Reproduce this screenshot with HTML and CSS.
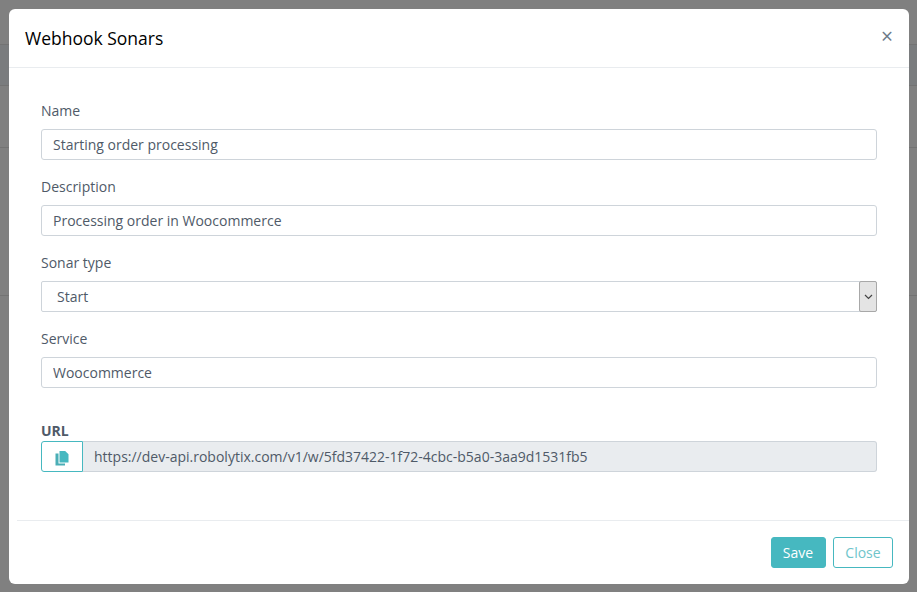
FILE: index.html
```html
<!DOCTYPE html>
<html lang="en">
<head>
<meta charset="utf-8">
<title>Webhook Sonars</title>
<link rel="stylesheet" href="styles.css">
</head>
<body>
<div class="backdrop">
  <div class="bg-row bg-row-1"></div>
  <div class="bg-row bg-row-2"></div>
  <div class="bg-row bg-row-3"></div>
  <div class="bg-row bg-row-4"></div>
  <div class="bg-row bg-row-5"></div>
</div>
<div class="modal">
  <header class="modal-header">
    <h5 class="modal-title">Webhook Sonars</h5>
    <span class="close-x">×</span>
  </header>
  <div class="modal-body">
    <div class="field">
      <label class="label">Name</label>
      <input class="control" type="text" value="Starting order processing">
    </div>
    <div class="field">
      <label class="label">Description</label>
      <input class="control" type="text" value="Processing order in Woocommerce">
    </div>
    <div class="field">
      <label class="label">Sonar type</label>
      <div class="select">
        <span class="select-value">Start</span>
        <span class="select-arrow">
          <svg width="9" height="6" viewBox="0 0 9 6"><path d="M1 1l3.5 3.5L8 1" fill="none" stroke="#444" stroke-width="1.2"/></svg>
        </span>
      </div>
    </div>
    <div class="field">
      <label class="label">Service</label>
      <input class="control" type="text" value="Woocommerce">
    </div>
    <div class="url-block">
      <label class="url-label">URL</label>
      <div class="input-group">
        <button class="copy-btn" type="button">
          <svg width="14" height="15" viewBox="0 0 14 15"><path d="M4.5 0H10.2L13.5 3.3V11.5H4.5Z" fill="#46b8c0"/><path d="M0.5 2.5H3.5V12.5H10V14.5H0.5Z" fill="#4aaeb6"/></svg>
        </button>
        <div class="readonly">https://dev-api.robolytix.com/v1/w/5fd37422-1f72-4cbc-b5a0-3aa9d1531fb5</div>
      </div>
    </div>
  </div>
  <footer class="modal-footer">
    <button class="btn btn-save" type="button">Save</button>
    <button class="btn btn-close" type="button">Close</button>
  </footer>
</div>
</body>
</html>
```
FILE: styles.css
```css
* { box-sizing: border-box; }
html, body { margin: 0; height: 100%; overflow: hidden; }
body {
  background: #808080;
  font-family: "Open Sans", sans-serif;
  font-size: 14px;
  color: #4f5a68;
}
.backdrop { height: 592px; }
.bg-row { border-bottom: 1px solid #737373; }
.bg-row-1 { height: 45px; }
.bg-row-2 { height: 41px; background: #7a7c7e; }
.bg-row-3 { height: 62px; }
.bg-row-4 { height: 148px; }
.bg-row-5 { height: 296px; border-bottom: 0; }
.modal {
  position: absolute;
  left: 9px;
  top: 9px;
  width: 900px;
  height: 575px;
  background: #fff;
  border-radius: 6px;
  display: flex;
  flex-direction: column;
}
.modal-header {
  height: 59px;
  flex: none;
  border-bottom: 1px solid #e9ecef;
  display: flex;
  align-items: center;
  justify-content: space-between;
  padding: 0 16px;
}
.modal-title {
  margin: 0;
  font-size: 17.5px;
  font-weight: 400;
  color: #000;
  line-height: 27px;
}
.close-x {
  font-size: 21px;
  line-height: 1;
  color: #6c7a89;
  margin-top: -3px;
}
.modal-body {
  flex: 1;
  padding: 32px 32px 0;
}
.field { margin-bottom: 16px; }
.label {
  display: block;
  height: 21px;
  line-height: 21px;
  margin-bottom: 8px;
  color: #4f5a68;
}
.control, .select {
  display: block;
  width: 100%;
  height: 31px;
  border: 1px solid #ced4da;
  border-radius: 3px;
  background: #fff;
  font: inherit;
  color: #4f5a68;
  padding: 0 11px;
  outline: none;
}
.select {
  display: flex;
  align-items: center;
  justify-content: space-between;
  padding: 0 0 0 15px;
  border-radius: 2px;
}
.select-arrow {
  width: 18px;
  height: 31px;
  margin-right: -1px;
  background: #e4e4e4;
  border: 1px solid #a8a8a8;
  border-radius: 2px;
  display: flex;
  align-items: center;
  justify-content: center;
}
.url-block { margin-top: 32px; }
.url-label {
  display: block;
  height: 20px;
  line-height: 21px;
  font-weight: 700;
  color: #4f5a68;
  margin-bottom: 1px;
}
.input-group { display: flex; height: 31px; }
.copy-btn {
  width: 42px;
  flex: none;
  border: 1px solid #46b8c0;
  border-radius: 3px 0 0 3px;
  background: #fff;
  padding: 4px 0 0;
  display: flex;
  align-items: center;
  justify-content: center;
}
.readonly {
  flex: 1;
  background: #e9ecef;
  border: 1px solid #ced4da;
  border-left: 0;
  border-radius: 0 3px 3px 0;
  padding: 0 11px;
  line-height: 29px;
  color: #4f5a68;
}
.modal-footer {
  flex: none;
  height: 64px;
  margin-left: 8px;
  border-top: 1px solid #e9ecef;
  display: flex;
  justify-content: flex-end;
  align-items: flex-start;
  gap: 7px;
  padding: 16px 16px 0 0;
}
.btn {
  height: 31px;
  border-radius: 3px;
  font: inherit;
  padding: 0;
}
.btn-save {
  width: 55px;
  background: #46b8c0;
  border: 1px solid #46b8c0;
  color: #fff;
  padding-right: 1px;
}
.btn-close {
  width: 60px;
  background: #fff;
  border: 1px solid #46b8c0;
  color: #6fc5cb;
}
```
